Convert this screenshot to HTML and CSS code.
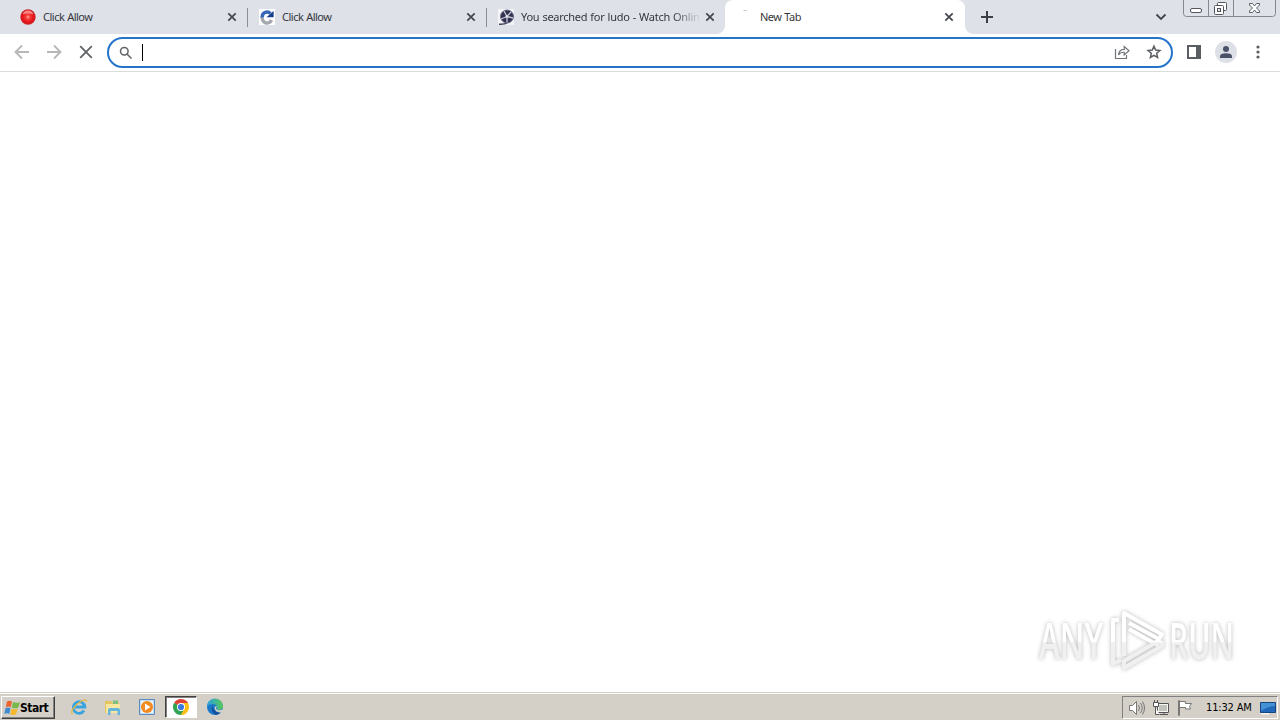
FILE: index.html
```html
<!DOCTYPE html>
<html lang="en">

<head>
    <meta charset="UTF-8">
    <meta name="viewport" content="width=device-width, initial-scale=1.0">
    <title>New Tab</title>
    <link rel="stylesheet" href="styles.css">
</head>

<body>
    <div class="tabs">
        <div class="tab">
            <svg class="favicon" viewBox="0 0 16 16">
                <defs>
                    <radialGradient id="red">
                        <stop offset="0" stop-color="#ffb0a8" />
                        <stop offset=".25" stop-color="#f8423e" />
                        <stop offset=".7" stop-color="#e31218" />
                        <stop offset="1" stop-color="#c9282c" />
                    </radialGradient>
                </defs>
                <circle cx="8" cy="8" r="7.7" fill="url(#red)" />
                <path d="M2.500 5.500Q4 1.500 8 1.500t5.500 4Q8 3.500 2.500 5.500" fill="#ffaaa3" opacity=".75" />
            </svg>
            <span class="title">Click Allow</span>
            <svg class="close" viewBox="0 0 10 10"><path d="M1.3 1.3l7.4 7.4M8.7 1.3L1.3 8.7" /></svg>
        </div>
        <div class="tab">
            <svg class="favicon" viewBox="0 0 16 16">
                <path d="M0 0h16v16H0z" fill="#fff" />
                <path d="M3.400 8A4.800 4.800 0 0 0 12.500 11" fill="none" stroke="#a5a9ae" stroke-width="3.400" />
                <path d="M3.300 8.500A4.800 4.800 0 0 1 11.500 4.500" fill="none" stroke="#3866b8" stroke-width="3.400" />
                <path d="M14.600 2v6.200H7.500z" fill="#183f8d" />
            </svg>
            <span class="title">Click Allow</span>
            <svg class="close" viewBox="0 0 10 10"><path d="M1.3 1.3l7.4 7.4M8.7 1.3L1.3 8.7" /></svg>
        </div>
        <div class="tab">
            <svg class="favicon" viewBox="0 0 16 16">
                <path d="M0 0h16v16H0z" fill="#f4f4f7" />
                <circle cx="9" cy="7.500" r="6.500" fill="#30304f" stroke="#666681" />
                <path d="M1 15.200q6 .3 8-1.400" fill="none" stroke="#44445c" stroke-width="1.400" />
                <path d="M9 7.500L6 2M9 7.500l4-4.500M9 7.500l6 1.500M9 7.500v6M9 7.500L3 10" stroke="#c9cad8" stroke-width="1.300" />
                <circle cx="9" cy="7.500" r="1.500" fill="#dcdce6" />
            </svg>
            <span class="title long">You searched for ludo - Watch Onlin</span>
            <svg class="close" viewBox="0 0 10 10"><path d="M1.3 1.3l7.4 7.4M8.7 1.3L1.3 8.7" /></svg>
        </div>
        <div class="tab active">
            <svg class="favicon" viewBox="0 0 16 16"><path d="M6.5 1.5h3" stroke="#c4c4c4" /></svg>
            <span class="title">New Tab</span>
            <svg class="close" viewBox="0 0 10 10"><path d="M1.3 1.3l7.4 7.4M8.7 1.3L1.3 8.7" /></svg>
        </div>
        <svg class="plus" viewBox="0 0 12 12"><path d="M6 0v12M0 6h12" /></svg>
        <svg class="chevron" viewBox="0 0 12 8"><path d="M1.500 1.500L6 6l4.500-4.500" /></svg>
        <div class="controls">
            <svg width="93" height="17" viewBox="0 0 93 17">
                <path d="M.5 0v13.500q0 3 3 3h86q3 0 3-3V0" fill="#dfe2e8" stroke="#85888f" />
                <path d="M25.500 0v16M50.500 0v16" stroke="#85888f" />
                <rect x="7.500" y="8.500" width="11" height="4" rx="1.500" fill="#fff" stroke="#53565d" />
                <rect x="34.500" y="2.500" width="9" height="8" rx="1" fill="#fff" stroke="#53565d" />
                <rect x="31.500" y="5.500" width="9" height="9" rx="1" fill="#fff" stroke="#53565d" />
                <rect x="34.500" y="8.500" width="3" height="3" fill="#dfe2e8" stroke="#53565d" />
                <path d="M66.500 3.500h3l2 2.500 2-2.500h3v1.500l-3 3 3 3v1.500h-3l-2-2.500-2 2.500h-3v-1.500l3-3-3-3z" fill="#fff" stroke="#5b5e65" />
            </svg>
        </div>
    </div>

    <div class="toolbar">
        <svg class="nav" viewBox="0 0 16 16"><path d="M15 8H2M8 1.500L1.500 8 8 14.500" /></svg>
        <svg class="nav" viewBox="0 0 16 16"><path d="M1 8h13M8 1.500L14.500 8 8 14.500" /></svg>
        <svg class="nav stop" viewBox="0 0 16 16"><path d="M2.200 2.200l11.600 11.600M13.800 2.200L2.200 13.800" /></svg>
        <div class="omnibox">
            <svg class="search" viewBox="0 0 14 14">
                <circle cx="5.300" cy="5.300" r="3.800" />
                <path d="M8.200 8.200l4.300 4.300" />
            </svg>
            <span class="caret"></span>
            <svg class="share" viewBox="0 0 16 16">
                <path d="M1.500 5v9.500h11V11" />
                <path d="M4.500 11Q5 5.300 10.200 5.300V2.500L15 6.700l-4.800 4.200V8.300Q6.500 8 4.500 11z" />
            </svg>
            <svg class="star" viewBox="0 0 16 16"><path d="M8 2.200l1.700 3.900 4.200.4-3.200 2.800.9 4.200L8 11.300l-3.600 2.200.9-4.200-3.200-2.800 4.200-.4z" /></svg>
        </div>
        <svg class="panel" viewBox="0 0 14 14">
            <path d="M1 1h12v12H1z" fill="none" stroke="#5a5d62" stroke-width="2" />
            <path d="M9 1h4v12H9z" fill="#5a5d62" />
        </svg>
        <svg class="profile" viewBox="0 0 22 22">
            <circle cx="11" cy="11" r="11" fill="#dde1e7" />
            <circle cx="11" cy="8" r="3" fill="#4a5268" />
            <path d="M5 17v-1.500q0-3.300 6-3.300t6 3.300V17z" fill="#4a5268" />
        </svg>
        <svg class="dots" viewBox="0 0 4 14">
            <circle cx="2" cy="2" r="1.600" />
            <circle cx="2" cy="7" r="1.600" />
            <circle cx="2" cy="12" r="1.600" />
        </svg>
    </div>

    <div class="page">
        <svg class="watermark" viewBox="0 0 210 70">
            <defs>
                <linearGradient id="fade" gradientUnits="userSpaceOnUse" x1="0" y1="0" x2="0" y2="70">
                    <stop offset=".52" stop-color="#fff" />
                    <stop offset=".54" stop-color="#f0f0f0" />
                </linearGradient>
            </defs>
            <g class="letters">
                <text x="8" y="54" textLength="64" lengthAdjust="spacingAndGlyphs">ANY</text>
                <text x="138" y="54" textLength="65" lengthAdjust="spacingAndGlyphs">RUN</text>
            </g>
            <g class="mark">
                <path d="M93 51V8l38 21.500-3 4.500L98 18" />
                <path d="M98 24l30 17" />
                <path d="M88 15h-6v44l8-4" />
                <path d="M93 63l38-22v-3l-4-2L93 56z" />
            </g>
        </svg>
    </div>

    <div class="taskbar">
        <div class="start">
            <svg viewBox="0 0 16 16">
                <path d="M3 1.500Q5.500 0 8 1.500L6.800 7.200Q4.500 6 1.800 7.200z" fill="#ea6330" />
                <path d="M9 2q3 1.500 7 .2l-1.900 5.700Q11 9 7.800 7.500z" fill="#79b84a" />
                <path d="M1.500 8.200q2.600-1.200 5 0L5.300 14Q2.800 12.700.2 14z" fill="#408bd0" />
                <path d="M7.500 8.500q3 1.400 6.300.2L12 14.500q-2.800 1.200-5.800-.3z" fill="#f4b92e" />
            </svg>
            <span>Start</span>
        </div>
        <div class="task">
            <svg viewBox="0 0 18 18">
                <path d="M14 12.500A5.800 5.800 0 1 1 14.800 9H5" fill="none" stroke="#38a3df" stroke-width="2.800" />
                <path d="M2.500 16C-.5 14 5 7 10 4c4-2.400 7-3 6.500 0" fill="none" stroke="#e5b744" stroke-width="1.300" />
            </svg>
        </div>
        <div class="task">
            <svg viewBox="0 0 18 18">
                <path d="M1 3h6l1 1.500h7V15H1z" fill="#e5c45f" />
                <path d="M2 6h14v9H2z" fill="#f8e79e" />
                <path d="M9 2.500h5V6H9z" fill="#81bf80" />
                <path d="M4 17v-5q0-2 2-2h8q2 0 2 2v5h-2.500v-4h-7v4z" fill="#65b5df" />
            </svg>
        </div>
        <div class="task">
            <svg viewBox="0 0 18 18">
                <path d="M1.500 1.500h15v15h-15z" fill="#c5dcf0" stroke="#568bc2" />
                <path d="M3 3h12v12H3z" fill="#eef4fa" />
                <circle cx="9" cy="9" r="6" fill="#f18b20" />
                <path d="M7 5.500L12.500 9 7 12.500z" fill="#fff" />
            </svg>
        </div>
        <div class="task pressed">
            <svg viewBox="0 0 18 18">
                <path d="M9 9L2.070 5A8 8 0 0 1 15.930 5z" fill="#df4335" />
                <path d="M9 9l6.930-4A8 8 0 0 1 9 17z" fill="#fbc116" />
                <path d="M9 9v8A8 8 0 0 1 2.070 5z" fill="#32a350" />
                <path d="M9 5h6.930L15 3.700H7z" fill="#df4335" />
                <path d="M5.600 11L2.100 5 9 9zM12.400 11L9 17V9z" fill="#32a350" />
                <path d="M12.400 11L9 17l4-1 3-5V5H9z" fill="#fbc116" />
                <circle cx="9" cy="9" r="4" fill="#fff" />
                <circle cx="9" cy="9" r="3.100" fill="#3b78e0" />
            </svg>
        </div>
        <div class="task">
            <svg viewBox="0 0 18 18">
                <defs>
                    <linearGradient id="edge">
                        <stop stop-color="#2b9fe0" />
                        <stop offset="1" stop-color="#58c957" />
                    </linearGradient>
                </defs>
                <circle cx="9" cy="9" r="8" fill="#1b78c8" />
                <path d="M1 9a8 8 0 0 1 16-1c.3 3-2.500 4.500-5.500 3.700-1.300-.4-.2-1.200-.3-2.500C11 5.500 3.500 4.500 1 9z" fill="url(#edge)" />
                <path d="M6.500 8Q4 13.500 9.500 16.800 12 17 14.800 14.500 8 15 6.500 8z" fill="#15509c" />
                <path d="M11 8q-2 2.500.5 4 2.500 1 6-1v2.500l-2 1q-5 .5-6.500-3T11 8z" fill="#d4d0c8" />
            </svg>
        </div>
        <div class="tray">
            <svg class="volume" viewBox="0 0 18 18">
                <path d="M1.500 6.500h3l4-4v13l-4-4h-3z" fill="#fff" stroke="#777" />
                <path d="M10.500 6q2 3 0 6M12.500 4q3.500 5 0 10M14.500 2.500q4 6.500 0 13" fill="none" stroke="#777" />
            </svg>
            <svg class="network" viewBox="0 0 18 18">
                <path d="M5.500 4.500h11v9h-11z" fill="#f4f4f1" stroke="#555" />
                <path d="M7 6h8v6H7z" fill="#c2c2bd" />
                <path d="M8 15.500h8M12 13v2" stroke="#555" />
                <path d="M1.500 3.500h5v4h-5zM2.500 1v2M5.500 1v2M3.500 8v7.500h4" fill="#fff" stroke="#555" />
            </svg>
            <svg class="flag" viewBox="0 0 18 18">
                <path d="M2.500 1.500v15h1v-15zM3.500 2.500h6v2h6l-2 3 1 2.500h-5V8.500h-6z" fill="#fff" stroke="#777" />
            </svg>
            <span class="clock">11:32 AM</span>
            <svg class="desktop" viewBox="0 0 16 14">
                <path d="M.5 1.500h15v10H.5z" fill="#2168b8" stroke="#16457f" />
                <path d="M1 2h14v3Q8 5 1 10z" fill="#4491d6" />
                <path d="M1 12h8v1.500H1z" fill="#f5f5f5" />
            </svg>
        </div>
    </div>
</body>

</html>
```
FILE: styles.css
```css
* {
    margin: 0;
    padding: 0;
    box-sizing: border-box;
}

body {
    width: 1280px;
    height: 720px;
    display: flex;
    flex-direction: column;
    overflow: hidden;
    background: #fff;
    font-family: "DejaVu Sans Condensed", "DejaVu Sans", sans-serif;
    font-size: 11px;
    color: #35373d;
}

svg {
    display: block;
    flex: none;
}

/* tabs */
.tabs {
    height: 34px;
    padding-left: 9px;
    display: flex;
    align-items: center;
    background: #dee1e8;
}

.tab {
    position: relative;
    width: 239px;
    height: 34px;
    padding: 0 11px;
    display: flex;
    align-items: center;
}

.tab:nth-child(-n+2)::after {
    content: "";
    position: absolute;
    right: 0;
    top: 8px;
    width: 1px;
    height: 19px;
    background: #8b8e96;
}

.favicon {
    width: 16px;
    height: 16px;
    margin-right: 7px;
}

.title {
    flex: 1;
    white-space: nowrap;
    font-family: "Noto Sans", sans-serif;
    font-size: 11px;
    letter-spacing: -.5px;
    word-spacing: .5px;
    line-height: 16px;
}

.title.long {
    letter-spacing: -.27px;
    -webkit-mask-image: linear-gradient(to right, #000 152px, transparent 180px);
    mask-image: linear-gradient(to right, #000 152px, transparent 180px);
}

.close {
    width: 10px;
    height: 10px;
    fill: none;
    stroke: #43464c;
    stroke-width: 1.7;
}

.tab.active {
    width: 240px;
    margin-left: -1px;
    padding-left: 12px;
    background: #fff;
    border-radius: 8px 8px 0 0;
}

.tab.active::before,
.tab.active::after {
    content: "";
    position: absolute;
    bottom: 0;
    width: 8px;
    height: 8px;
}

.tab.active::before {
    left: -8px;
    background: radial-gradient(circle at 0 0, transparent 7.5px, #fff 8px);
}

.tab.active::after {
    right: -8px;
    background: radial-gradient(circle at 100% 0, transparent 7.5px, #fff 8px);
}

.plus {
    width: 12px;
    height: 12px;
    margin-left: 16px;
    stroke: #3c3f45;
    stroke-width: 2;
}

.chevron {
    width: 12px;
    height: 8px;
    margin-left: auto;
    margin-right: 16px;
    fill: none;
    stroke: #43464c;
    stroke-width: 1.8;
}

.controls {
    align-self: flex-start;
    margin-right: 4px;
}

/* toolbar */
.toolbar {
    height: 38px;
    padding: 3px 20px 0 14px;
    display: flex;
    align-items: flex-start;
    border-bottom: 1px solid #dadbdd;
}

.nav {
    width: 16px;
    height: 16px;
    margin: 7px 16px 0 0;
    fill: none;
    stroke: #b6b7b9;
    stroke-width: 1.8;
}

.nav.stop {
    margin-right: 13px;
    stroke: #606367;
}

.omnibox {
    width: 1066px;
    height: 31px;
    padding: 0 9px 0 10px;
    display: flex;
    align-items: center;
    border: 2px solid #2474ca;
    border-radius: 16px;
}

.search {
    width: 14px;
    height: 14px;
    fill: none;
    stroke: #606367;
    stroke-width: 1.5;
}

.caret {
    width: 1px;
    height: 17px;
    margin-left: 9px;
    background: #000;
}

.share {
    width: 16px;
    height: 16px;
    margin-left: auto;
    margin-right: 16px;
    margin-bottom: 2px;
    fill: none;
    stroke: #707378;
    stroke-width: 1.2;
}

.star {
    width: 16px;
    height: 16px;
    margin-bottom: 1px;
    fill: none;
    stroke: #5b5e63;
    stroke-width: 1.5;
}

.panel {
    width: 14px;
    height: 14px;
    margin: 8px 0 0 14px;
}

.profile {
    width: 22px;
    height: 22px;
    margin: 4px 0 0 14px;
}

.dots {
    width: 4px;
    height: 14px;
    margin: 8px 0 0 19px;
    fill: #5a5d62;
}

/* page */
.page {
    flex: 1;
    display: flex;
    align-items: flex-end;
    justify-content: flex-end;
    padding: 0 39px 17px 0;
}

.watermark {
    width: 210px;
    height: 70px;
    overflow: visible;
    filter: drop-shadow(0 0 2px rgba(0, 0, 0, .28));
}

.letters {
    font-family: "Open Sans", sans-serif;
    font-size: 50px;
    font-weight: 600;
    fill: url(#fade);
}

.mark {
    fill: none;
    stroke: url(#fade);
    stroke-width: 4;
    stroke-linejoin: round;
}

/* taskbar */
.taskbar {
    height: 28px;
    padding: 2px 2px 0 1px;
    display: flex;
    align-items: flex-start;
    background: #d4d0c8;
    border-top: 1px solid #d4d0c8;
    box-shadow: inset 0 1px #fff;
}

.start {
    width: 54px;
    height: 23px;
    margin-top: 1px;
    margin-right: 8px;
    padding-left: 2px;
    display: flex;
    align-items: center;
    border: 1px solid;
    border-color: #fff #404040 #404040 #fff;
    box-shadow: inset -1px -1px #808080;
    color: #000;
    font-weight: bold;
    font-size: 12px;
    letter-spacing: -.5px;
}

.start svg {
    width: 16px;
    height: 16px;
}

.task {
    width: 32px;
    height: 22px;
    margin-top: 1px;
    margin-right: 2px;
    display: flex;
    align-items: center;
    justify-content: center;
}

.task svg {
    width: 18px;
    height: 18px;
}

.task.pressed {
    background: #fff;
    border: 1px solid;
    border-color: #404040 #fff #fff #404040;
    box-shadow: inset 1px 1px #808080;
}

.tray {
    width: 156px;
    height: 23px;
    margin-top: 1px;
    margin-left: auto;
    padding-left: 5px;
    display: flex;
    align-items: center;
    border: 1px solid;
    border-color: #808080 #fff #fff #808080;
    color: #000;
}

.tray svg {
    width: 18px;
    height: 18px;
}

.tray .network,
.tray .flag {
    margin-left: 6px;
}

.clock {
    width: 48px;
    margin-left: 12px;
    white-space: nowrap;
    letter-spacing: -.15px;
}

.tray .desktop {
    width: 16px;
    height: 14px;
    margin-left: 6px;
}
```
